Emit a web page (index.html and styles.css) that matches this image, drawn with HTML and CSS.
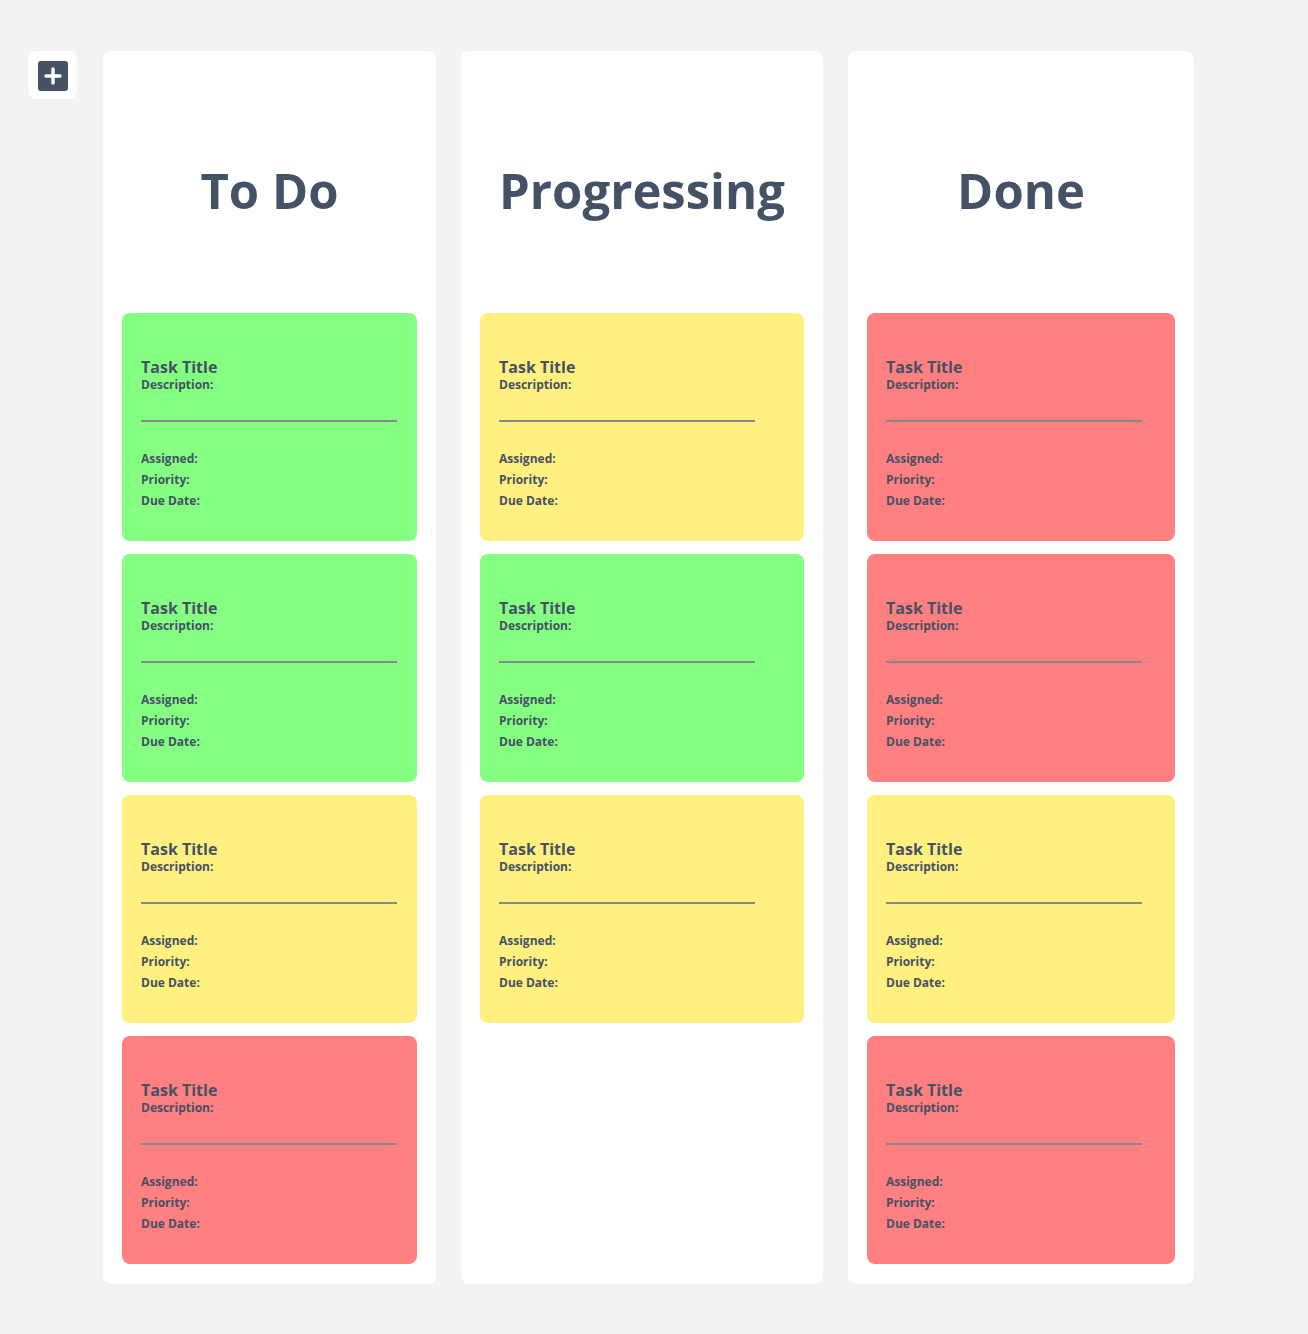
FILE: index.html
```html
<!DOCTYPE html>
<html lang="en">
<head>
<meta charset="utf-8">
<meta name="viewport" content="width=device-width, initial-scale=1">
<title>Task Board</title>
<link rel="stylesheet" href="styles.css">
</head>
<body>
<main class="page">
  <button class="add" type="button" aria-label="Add task">
    <svg class="add-icon" viewBox="0 0 30 30" aria-hidden="true">
      <rect width="30" height="30" rx="3" fill="#455165"/>
      <path d="M15 8v14M8 15h14" stroke="#fff" stroke-width="3.400" stroke-linecap="round"/>
    </svg>
  </button>
  <div class="board" id="board"></div>
</main>
<template id="card-template">
  <article class="card">
    <h2 class="card-title">Task Title</h2>
    <p class="description">Description:</p>
    <hr class="rule">
    <p class="detail">Assigned:</p>
    <p class="detail">Priority:</p>
    <p class="detail">Due Date:</p>
  </article>
</template>
<script src="board.js"></script>
</body>
</html>
```
FILE: styles.css
```css
* {
  box-sizing: border-box;
}

body {
  margin: 0;
  background: #f3f3f3;
  color: #455165;
  font-family: "Segoe UI", "Open Sans", "Noto Sans", sans-serif;
  font-weight: 700;
}

.page {
  display: flex;
  align-items: flex-start;
  gap: 26px;
  padding: 51px 114px 50px 28px;
}

.add {
  flex: none;
  display: flex;
  justify-content: center;
  width: 49px;
  padding: 10px 0 8px;
  border: 0;
  border-radius: 8px;
  background: #fff;
  cursor: pointer;
}

.add-icon {
  width: 30px;
  height: 30px;
}

.board {
  flex: 1;
  display: grid;
  grid-template-columns: 333fr 362fr 346fr;
  gap: 25px;
}

.column {
  display: flex;
  flex-direction: column;
  gap: 13px;
  min-width: 0;
  padding: 0 19px 20px;
  border-radius: 8px;
  background: #fff;
}

.column-title {
  margin: 0;
  padding: 105px 0 76px;
  font-size: 49px;
  line-height: 68px;
  text-align: center;
}

.card {
  padding: 44px 19px 30px;
  border-radius: 8px;
}

.low {
  background: #84ff82;
}

.medium {
  background: #fff080;
}

.high {
  background: #ff8080;
}

.card-title {
  margin: 0;
  font-size: 16px;
  line-height: 20px;
}

.description,
.detail {
  margin: 0;
  font-size: 12px;
}

.description {
  line-height: 16px;
}

.rule {
  width: 256px;
  max-width: 100%;
  margin: 27px 0 26px;
  border: 0;
  border-top: 2px solid #888;
}

.detail {
  line-height: 21px;
}
```
FILE: board.js
```js
const columns = [
  { title: "To Do", tasks: ["low", "low", "medium", "high"] },
  { title: "Progressing", tasks: ["medium", "low", "medium"] },
  { title: "Done", tasks: ["high", "high", "medium", "high"] }
];

const board = document.getElementById("board");
const template = document.getElementById("card-template");

for (const { title, tasks } of columns) {
  const column = document.createElement("section");
  column.className = "column";
  const heading = document.createElement("h1");
  heading.className = "column-title";
  heading.textContent = title;
  column.append(heading);
  for (const priority of tasks) {
    const card = template.content.firstElementChild.cloneNode(true);
    card.classList.add(priority);
    column.append(card);
  }
  board.append(column);
}
```
